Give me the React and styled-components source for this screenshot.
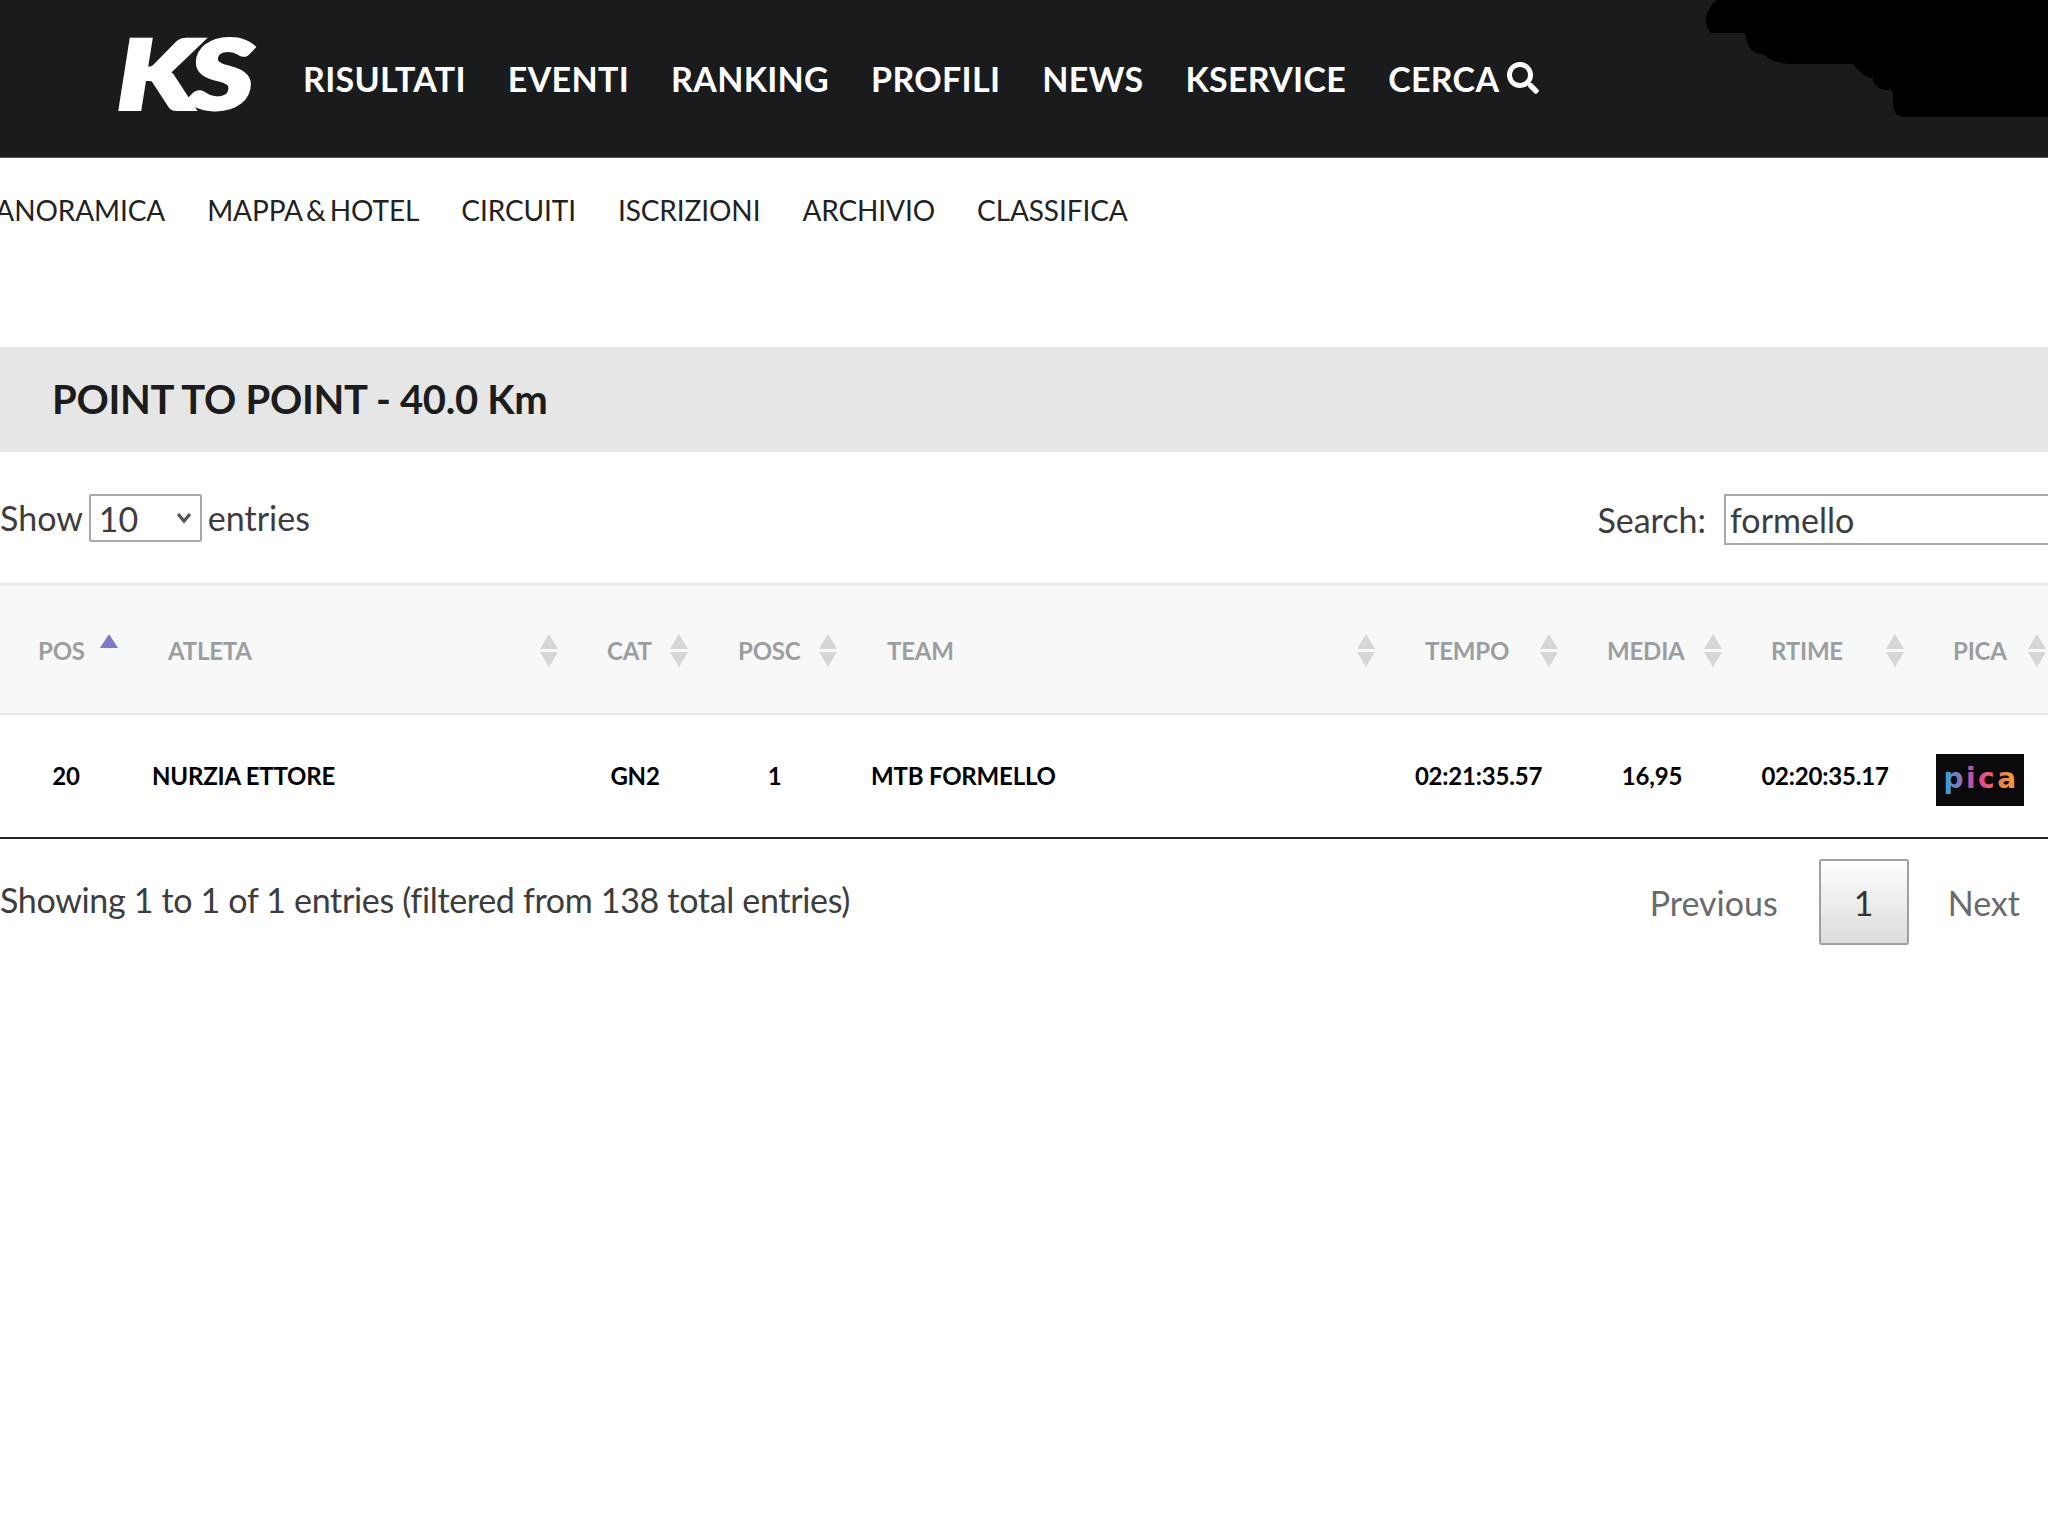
import React from 'react';
import styled, { createGlobalStyle } from 'styled-components';
import { FaSearch } from 'react-icons/fa';

const GlobalStyle = createGlobalStyle`
    html, body {
        margin: 0;
        padding: 0;
        background: #fff;
    }
    body {
        font-family: Lato, "Open Sans", sans-serif;
        color: #3d3d3d;
    }
`

const Page = styled.div`
    width: 2048px;
    height: 1536px;
    overflow: hidden;
    background: #fff;
`

const Header = styled.header`
    position: relative;
    height: 157px;
    display: flex;
    align-items: center;
    padding-left: 117px;
    background: #1a1b1d;
    border-bottom: 1px solid #55565a;
`

const Logo = styled.span`
    width: 140px;
    margin: -14px 46px 0 0;
    color: #fff;
    font-size: 96px;
    line-height: 75px;
    font-weight: 900;
    font-style: italic;
    letter-spacing: -6px;
    -webkit-text-stroke: 4px #fff;
    transform: scaleX(1.28);
    transform-origin: left center;
`

const MainNav = styled.nav`
    display: flex;
    align-items: center;
    gap: 42px;
    margin-top: -1px;
`

const MainLink = styled.a`
    display: flex;
    align-items: center;
    color: #fff;
    font-size: 34px;
    font-weight: 700;
    letter-spacing: 0.3px;
    svg {
        margin-left: 8px;
    }
`

const Redaction = styled.svg`
    position: absolute;
    top: 0;
    right: -3px;
`

const SubNav = styled.nav`
    height: 189px;
    display: flex;
    gap: 42px;
    margin-left: -20px;
    padding-top: 35px;
    box-sizing: border-box;
`

const SubLink = styled.a`
    font-size: 28px;
    line-height: 34px;
    color: #222;
    letter-spacing: -0.1px;
    word-spacing: -3px;
`

const TitleBar = styled.h2`
    height: 105px;
    margin: 0;
    padding: 0 0 2px 52px;
    box-sizing: border-box;
    display: flex;
    align-items: center;
    background: #e6e6e6;
    color: #1c1c1c;
    font-size: 40px;
    font-weight: 700;
    letter-spacing: -0.3px;
`

const Controls = styled.div`
    height: 131px;
    display: flex;
    justify-content: space-between;
    align-items: flex-start;
    margin-right: -120px;
    padding-top: 42px;
    box-sizing: border-box;
    font-size: 34px;
    line-height: 48px;
`

const LengthLabel = styled.label`
    display: flex;
    align-items: center;
    gap: 6px;
`

const LengthSelect = styled.select`
    width: 113px;
    height: 48px;
    padding-left: 8px;
    appearance: none;
    background: #fff url("data:image/svg+xml,%3Csvg xmlns='http://www.w3.org/2000/svg' width='16' height='12'%3E%3Cpath d='M2 2 L8 9 L14 2' fill='none' stroke='%23555' stroke-width='3.4'/%3E%3C/svg%3E") no-repeat right 8px center;
    border: 2px solid #a9a9a9;
    border-radius: 2px;
    color: #3d3d3d;
    font-family: inherit;
    font-size: 34px;
`

const SearchLabel = styled.label`
    display: flex;
    align-items: center;
    gap: 18px;
`

const SearchInput = styled.input`
    width: 444px;
    height: 51px;
    padding: 0 4px;
    box-sizing: border-box;
    border: 2px solid #a9a9a9;
    color: #3d3d3d;
    font-family: inherit;
    font-size: 34px;
`

const Table = styled.table`
    width: 2056px;
    table-layout: fixed;
    border-collapse: collapse;
    border-top: 2px solid #e8e8e8;
    border-bottom: 2px solid #222;
`

const HeadCell = styled.th`
    height: 130px;
    padding: 49px 10px 0 ${(props) => props.$pad}px;
    box-sizing: border-box;
    vertical-align: top;
    text-align: left;
    background: #f8f8f8;
    border-bottom: 2px solid #e8e8e8;
    color: #9b9ea1;
    font-size: 24px;
    line-height: 30px;
    font-weight: 700;
    letter-spacing: -0.2px;
`

const HeadInner = styled.div`
    display: flex;
    justify-content: space-between;
    align-items: center;
`

const BodyCell = styled.td`
    height: 124px;
    padding: 0 0 2px ${(props) => (props.$left ? 24 : 4)}px;
    box-sizing: border-box;
    text-align: ${(props) => (props.$left ? 'left' : 'center')};
    color: #000;
    font-size: 24px;
    font-weight: 700;
    letter-spacing: -0.2px;
`

const PicaBadge = styled.svg`
    display: block;
    margin: 9px 0 0 18px;
`

const Footer = styled.div`
    display: flex;
    justify-content: space-between;
    align-items: flex-start;
    padding: 20px 28px 0 0;
    font-size: 34px;
`

const Info = styled.div`
    margin-top: 20px;
    letter-spacing: -0.33px;
`

const Pagination = styled.div`
    display: flex;
    align-items: center;
`

const PageLink = styled.a`
    color: #6a6a6a;
`

const PageCurrent = styled.a`
    width: 90px;
    height: 86px;
    margin: 0 39px 0 41px;
    display: flex;
    align-items: center;
    justify-content: center;
    box-sizing: border-box;
    border: 2px solid #a0a0a0;
    border-radius: 3px;
    background: linear-gradient(to bottom, #fdfdfd, #dcdcdc);
    color: #333;
`

function SortArrows({ active }) {
    if (active) {
        return (
            <svg width="18" height="34" viewBox="0 0 18 34">
                <path d="M9 0 L18 14 L0 14 Z" fill="#7b7bc9" />
            </svg>
        )
    }
    return (
        <svg width="18" height="34" viewBox="0 0 18 34">
            <path d="M9 0 L18 15 L0 15 Z" fill="#d6d6d6" />
            <path d="M0 18 L18 18 L9 33 Z" fill="#d6d6d6" />
        </svg>
    )
}

const columns = [
    { name: 'POS', width: 128, pad: 38, active: true },
    { name: 'ATLETA', width: 440, pad: 40 },
    { name: 'CAT', width: 130, pad: 39 },
    { name: 'POSC', width: 149, pad: 40 },
    { name: 'TEAM', width: 538, pad: 40 },
    { name: 'TEMPO', width: 183, pad: 40 },
    { name: 'MEDIA', width: 164, pad: 39 },
    { name: 'RTIME', width: 182, pad: 39 },
    { name: 'PICA', width: 142, pad: 39 },
]

const mainLinks = ['RISULTATI', 'EVENTI', 'RANKING', 'PROFILI', 'NEWS', 'KSERVICE']
const subLinks = ['PANORAMICA', 'MAPPA & HOTEL', 'CIRCUITI', 'ISCRIZIONI', 'ARCHIVIO', 'CLASSIFICA']

export default function App() {
    return (
        <Page>
            <GlobalStyle />
            <Header>
                <Logo>KS</Logo>
                <MainNav>
                    {mainLinks.map((item) => (
                        <MainLink key={item}>{item}</MainLink>
                    ))}
                    <MainLink>CERCA<FaSearch size={32} /></MainLink>
                </MainNav>
                <Redaction width="348" height="120" viewBox="0 0 348 120">
                    <path
                        d="M348 0 L14 0 C4 8 -2 22 8 33 L42 33 C44 46 48 54 60 54 C66 60 76 64 88 64 L150 64 C156 72 164 78 170 78 C170 86 176 90 186 90 C192 90 190 96 190 104 C190 112 194 117 202 117 L348 117 Z"
                        fill="#000"
                    />
                </Redaction>
            </Header>
            <SubNav>
                {subLinks.map((item) => (
                    <SubLink key={item}>{item}</SubLink>
                ))}
            </SubNav>
            <TitleBar>POINT TO POINT - 40.0 Km</TitleBar>
            <Controls>
                <LengthLabel>
                    Show
                    <LengthSelect defaultValue="10">
                        <option value="10">10</option>
                        <option value="25">25</option>
                        <option value="50">50</option>
                    </LengthSelect>
                    entries
                </LengthLabel>
                <SearchLabel>
                    Search:
                    <SearchInput type="text" defaultValue="formello" />
                </SearchLabel>
            </Controls>
            <Table>
                <colgroup>
                    {columns.map((col) => (
                        <col key={col.name} width={col.width} />
                    ))}
                </colgroup>
                <thead>
                    <tr>
                        {columns.map((col) => (
                            <HeadCell key={col.name} $pad={col.pad}>
                                <HeadInner>
                                    {col.name}
                                    <SortArrows active={col.active} />
                                </HeadInner>
                            </HeadCell>
                        ))}
                    </tr>
                </thead>
                <tbody>
                    <tr>
                        <BodyCell>20</BodyCell>
                        <BodyCell $left>NURZIA ETTORE</BodyCell>
                        <BodyCell>GN2</BodyCell>
                        <BodyCell>1</BodyCell>
                        <BodyCell $left>MTB FORMELLO</BodyCell>
                        <BodyCell>02:21:35.57</BodyCell>
                        <BodyCell>16,95</BodyCell>
                        <BodyCell>02:20:35.17</BodyCell>
                        <BodyCell>
                            <PicaBadge width="88" height="52" viewBox="0 0 88 52">
                                <defs>
                                    <linearGradient id="picaGrad" x1="0" x2="1" y1="0" y2="0">
                                        <stop offset="0" stopColor="#2aa8e0" />
                                        <stop offset="0.45" stopColor="#e0409a" />
                                        <stop offset="1" stopColor="#f7a823" />
                                    </linearGradient>
                                </defs>
                                <rect width="88" height="52" fill="#0a0a0c" />
                                <text x="45" y="34" textAnchor="middle" fontFamily="'DejaVu Sans', sans-serif" fontSize="28" letterSpacing="2.5" fill="url(#picaGrad)">pica</text>
                            </PicaBadge>
                        </BodyCell>
                    </tr>
                </tbody>
            </Table>
            <Footer>
                <Info>Showing 1 to 1 of 1 entries (filtered from 138 total entries)</Info>
                <Pagination>
                    <PageLink>Previous</PageLink>
                    <PageCurrent>1</PageCurrent>
                    <PageLink>Next</PageLink>
                </Pagination>
            </Footer>
        </Page>
    )
}
